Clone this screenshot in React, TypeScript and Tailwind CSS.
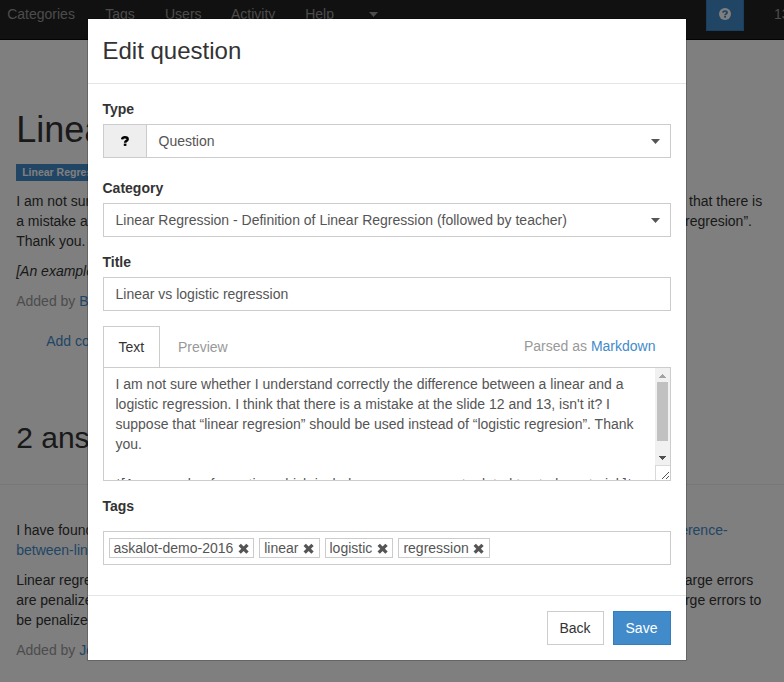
import type { ReactNode } from "react";

function Caret({ className }: { className: string }) {
  return (
    <svg className={className} width="9" height="5" viewBox="0 0 9 5" fill="currentColor">
      <path d="M0 0h9L4.5 5z" />
    </svg>
  );
}

function QuestionMark({ className }: { className: string }) {
  return (
    <svg className={className} width="8" height="10" viewBox="0 0 8 10" fill="none" stroke="currentColor">
      <path d="M1.1 3.3C1.3 1.8 2.4 1.2 3.9 1.2c1.7 0 2.8.8 2.8 2 0 1.9-2.6 1.5-2.6 3.6" strokeWidth="2.4" />
      <path d="M2.8 7.6h2.6v2.3H2.8z" fill="currentColor" stroke="none" />
    </svg>
  );
}

function Remove() {
  return (
    <svg className="shrink-0 text-[#555]" width="11" height="11" viewBox="0 0 11 11" fill="none" stroke="currentColor">
      <path d="M1.7 1.8l7.8 7.8M9.5 1.8L1.7 9.6" strokeWidth="3.3" />
    </svg>
  );
}

function Tag({ className, children }: { className: string; children: ReactNode }) {
  return (
    <span className={"flex h-5 items-center border border-[#ccc] leading-5 whitespace-nowrap " + className}>
      {children}
      <Remove />
    </span>
  );
}

function Split({ left, right, inset }: { left: ReactNode; right?: ReactNode; inset?: string }) {
  return (
    <div className={"flex justify-between whitespace-nowrap " + (inset ?? "")}>
      <span>{left}</span>
      <span>{right}</span>
    </div>
  );
}

const label = "block font-bold leading-5 text-[#333]";
const control = "flex h-[34px] items-center border border-[#ccc] text-[#555]";

function Page() {
  return (
    <div className="h-full">
      <nav className="flex h-10 border-b border-[#080808] bg-[#222] pt-1 pl-[7.2px] leading-5 text-[#999]">
        <span className="w-[98px]">Categories</span>
        <span className="w-[59.8px]">Tags</span>
        <span className="w-[66px]">Users</span>
        <span className="w-[74.2px]">Activity</span>
        <span className="w-[63.8px]">Help</span>
        <Caret className="mt-2" />
        <span className="-mt-1 ml-auto flex h-[31px] w-[38px] items-center justify-center border border-t-0 border-[#357ebd] bg-[#428bca] pb-[3px] text-white">
          <span className="flex size-3 items-center justify-center rounded-full bg-white text-[#428bca]">
            <QuestionMark className="h-[8px] w-[6px]" />
          </span>
        </span>
        <span className="ml-[30px] w-[10px] overflow-hidden whitespace-nowrap">137</span>
      </nav>
      <main className="pt-[70px] text-[#333]">
        <div className="pl-[16.2px]">
          <h1 className="text-[36px] leading-10">Linear vs logistic regression</h1>
          <div className="mt-[14px] flex">
            <span className="h-[17px] bg-[#428bca] px-[6px] text-[10.5px] leading-[17px] font-bold text-white">
              Linear Regression
            </span>
          </div>
          <p className="mt-[10px] leading-5 whitespace-nowrap">
            I am not sure whether I understand correctly the difference between a linear and a logistic regression. I think that there is
            <br />a mistake at the slide 12 and 13, isn't it? I suppose that “linear regresion” should be used instead of “logistic regresion”.
            <br />
            Thank you.
          </p>
          <p className="mt-[10px] leading-5 italic">[An example of question]</p>
          <p className="mt-[10px] leading-5 text-[#999]">
            Added by <span className="text-[#428bca]">B</span>
          </p>
          <p className="mt-5 ml-[30px] leading-5 text-[#428bca]">Add comment</p>
          <h2 className="mt-[67px] text-[30px] leading-10">2 answers</h2>
        </div>
        <hr className="mt-[26px] border-[#eee]" />
        <div className="pt-[35px] pr-4 pl-[16.2px] leading-5">
          <Split inset="pr-[40.4px]" left="I have found" right={<span className="text-[#428bca]">difference-</span>} />
          <div className="text-[#428bca]">between-linear</div>
          <div className="mt-[10px]">
            <Split inset="pr-[14.8px]" left="Linear regression" right="Large errors" />
            <Split inset="pr-[6.8px]" left="are penalized" right="large errors to" />
            <div>be penalized</div>
          </div>
          <p className="mt-[10px] text-[#999]">
            Added by <span className="text-[#428bca]">Jo</span>
          </p>
        </div>
      </main>
    </div>
  );
}

function Editor() {
  return (
    <div>
      <div className="flex h-[41px] leading-5">
        <div className="h-[41px] w-[57px] border border-b-0 border-[#ccc] bg-white pt-[10px] pl-[15px] text-[#333]">
          Text
        </div>
        <div className="pt-[11px] pl-[18.4px] text-[#999]">Preview</div>
        <div className="ml-auto pt-[10px] pr-[15px] text-[#999]">
          Parsed as <span className="text-[#428bca]">Markdown</span>
        </div>
      </div>
      <div className="flex h-[114px] border border-[#ccc] text-[#555]">
        <div className="h-full flex-1 overflow-hidden pt-[6px] pl-3 leading-5 whitespace-nowrap">
          I am not sure whether I understand correctly the difference between a linear and a
          <br />
          logistic regression. I think that there is a mistake at the slide 12 and 13, isn't it? I
          <br />
          suppose that “linear regresion” should be used instead of “logistic regresion”. Thank
          <br />
          you.
          <br />
          <br />
          *[An example of question which includes some comment related to study material.]*
        </div>
        <div className="flex w-[15px] flex-col">
          <div className="flex h-[97px] flex-col items-center bg-[#f1f1f1]">
            <svg className="h-[14px] shrink-0" width="7" height="14" viewBox="0 0 7 14" shapeRendering="crispEdges">
              <path d="M0 10h7v-1h-1v-1h-1v-1h-1v-1h-1v1h-1v1h-1v1h-1z" fill="#a3a3a3" />
            </svg>
            <div className="h-[59px] w-[11px] bg-[#c1c1c1]" />
            <svg className="mt-[15px] shrink-0" width="7" height="4" viewBox="0 0 7 4" shapeRendering="crispEdges">
              <path d="M0 0h7v1h-1v1h-1v1h-1v1h-1v-1h-1v-1h-1v-1h-1z" fill="#505050" />
            </svg>
          </div>
          <svg width="15" height="15" viewBox="0 0 15 15" shapeRendering="crispEdges">
            <path d="M0 0h15v1H1v14H0z" fill="#d9d9d9" />
            <path
              d="M7 13h1v1h-1zM8 12h1v1h-1zM9 11h1v1h-1zM10 10h1v1h-1zM11 9h1v1h-1zM12 8h1v1h-1zM13 7h1v1h-1zM11 13h1v1h-1zM12 12h1v1h-1zM13 11h1v1h-1z"
              fill="#555"
            />
          </svg>
        </div>
      </div>
    </div>
  );
}

function Modal() {
  return (
    <div className="w-[600px] border border-black/20 bg-white bg-clip-padding">
      <div className="border-b border-[#e5e5e5] px-[15px] pt-[15px] pb-[15px]">
        <h4 className="text-[24px] leading-[34px] text-[#333]">Edit question</h4>
      </div>
      <div className="p-[15px] pb-[30px]">
        <span className={label}>Type</span>
        <div className={control + " mt-[5px] mb-5"}>
          <span className="flex h-full w-[43px] items-center justify-center border-r border-[#ccc] bg-[#eee] text-black">
            <QuestionMark className="" />
          </span>
          <span className="pl-3">Question</span>
          <Caret className="mr-[10px] ml-auto" />
        </div>
        <span className={label}>Category</span>
        <div className={control + " mt-[5px] mb-[15px] pl-3"}>
          Linear Regression - Definition of Linear Regression (followed by teacher)
          <Caret className="mr-[10px] ml-auto" />
        </div>
        <span className={label}>Title</span>
        <div className={control + " mt-[5px] mb-[15px] pl-3"}>Linear vs logistic regression</div>
        <Editor />
        <span className={label + " mt-[15px]"}>Tags</span>
        <div className={control + " mt-[15px] gap-[5px] pl-[5px]"}>
          <Tag className="w-[145px] gap-[5px] pl-1">askalot-demo-2016</Tag>
          <Tag className="w-[61px] gap-[4.4px] pl-[4.7px]">linear</Tag>
          <Tag className="w-[68px] gap-[5px] pl-1">logistic</Tag>
          <Tag className="w-[92px] gap-[4.4px] pl-[4.9px]">regression</Tag>
        </div>
      </div>
      <div className="flex justify-end gap-[9px] border-t border-[#e5e5e5] p-[15px] leading-5">
        <button className="h-[34px] w-[57px] border border-[#ccc] bg-white text-[#333]">Back</button>
        <button className="h-[34px] w-[58px] border border-[#357ebd] bg-[#428bca] text-white">Save</button>
      </div>
    </div>
  );
}

export default function App() {
  return (
    <div className="relative h-[682px] w-[784px] overflow-hidden bg-white font-['Liberation_Sans',Arial,sans-serif] text-[14px]">
      <Page />
      <div className="absolute inset-0 bg-black/50 pt-[18px] pl-[86.5px]">
        <Modal />
      </div>
    </div>
  );
}
